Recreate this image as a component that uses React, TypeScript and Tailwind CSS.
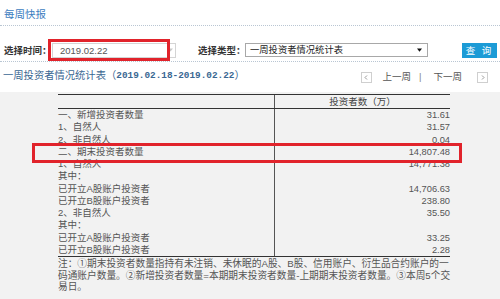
export default function App() {
  const rows: [string, string][] = [
    ["一、新增投资者数量", "31.61"],
    ["1、自然人", "31.57"],
    ["2、非自然人", "0.04"],
    ["二、期末投资者数量", "14,807.48"],
    ["1、自然人", "14,771.38"],
    ["其中：", ""],
    ["已开立A股账户投资者", "14,706.63"],
    ["已开立B股账户投资者", "238.80"],
    ["2、非自然人", "35.50"],
    ["其中：", ""],
    ["已开立A股账户投资者", "33.25"],
    ["已开立B股账户投资者", "2.28"],
  ];
  return (
    <div className="relative w-[500px] h-[299px] overflow-hidden bg-white font-['Liberation_Sans','Noto_Sans_CJK_SC',sans-serif] text-[#333] flex flex-col">
      {/* header */}
      <div className="h-[26px] shrink-0 border-b border-dotted border-[#b9c6d3] pl-[4px] pt-[3px] text-[10.5px] leading-[22px] text-[#3c7dc0]">
        每周快报
      </div>

      {/* filter row */}
      <div className="h-[36px] shrink-0 flex items-center border-b border-dotted border-[#b9c6d3] pt-[16px] pb-[3px]">
        <span className="ml-[4px] w-[48px] text-[9.5px] leading-[15px] font-bold text-[#333] whitespace-nowrap">选择时间：</span>
        <div className="w-[124px] h-[15px] border border-[#d4d4d4] flex items-center justify-between pl-[7px] pr-[2px]">
          <span className="text-[9.5px] leading-[13px] text-[#555]">2019.02.22</span>
          <svg width="5" height="4" viewBox="0 0 5 4">
            <path d="M0 0.5 L5 0.5 L2.5 3.5 Z" fill="#c8c8c8" />
          </svg>
        </div>
        <span className="ml-[22px] w-[47px] text-[9.5px] leading-[15px] font-bold text-[#333] whitespace-nowrap">选择类型：</span>
        <div className="w-[183px] h-[14px] border border-[#a8a8a8] flex items-center justify-between pl-[4px] pr-[5px]">
          <span className="text-[9.3px] leading-[12px] text-[#222] whitespace-nowrap">一周投资者情况统计表</span>
          <svg width="5" height="4" viewBox="0 0 5 4">
            <path d="M0 0.5 L5 0.5 L2.5 3.8 Z" fill="#111" />
          </svg>
        </div>
        <button className="ml-auto mr-[3px] w-[35px] h-[15px] bg-[#1c9bd6] text-white text-[9.5px] leading-[15px] tracking-[2px] flex items-center justify-center">
          查 询
        </button>
      </div>

      {/* title row */}
      <div className="h-[30px] shrink-0 flex items-center justify-between pl-[3px] pr-[12px]">
        <div className="flex items-center text-[10.3px] leading-[14px] text-[#3a6792] whitespace-nowrap -mt-[2px]">
          <span>一周投资者情况统计表（</span>
          <span className="font-['Liberation_Mono',monospace] text-[9.4px] font-bold">2019.02.18-2019.02.22</span>
          <span>）</span>
        </div>
        <div className="flex items-center text-[9.5px] leading-[12px] text-[#555]">
          <span className="w-[11px] h-[11px] border border-[#cfcfcf] flex items-center justify-center">
            <svg width="4" height="5" viewBox="0 0 4 5">
              <path d="M3 0.5 L1 2.5 L3 4.5" stroke="#999" fill="none" strokeWidth="1" />
            </svg>
          </span>
          <span className="ml-[11px]">上一周</span>
          <span className="ml-[8px] text-[#888]">|</span>
          <span className="ml-[12px]">下一周</span>
          <span className="ml-[15px] w-[11px] h-[11px] border border-[#cfcfcf] flex items-center justify-center">
            <svg width="4" height="5" viewBox="0 0 4 5">
              <path d="M1 0.5 L3 2.5 L1 4.5" stroke="#999" fill="none" strokeWidth="1" />
            </svg>
          </span>
        </div>
      </div>

      {/* gray content */}
      <div className="flex-1 bg-[#f2f2f2] pt-[2px] pl-[58px]">
        <div className="w-[392px]">
          <div className="flex h-[15px] border-t border-b border-[#333]">
            <div className="w-[216px]" />
            <div className="flex-1 border-l border-[#555] text-center text-[9.5px] leading-[13px] text-[#444]">投资者数（万）</div>
          </div>
          <div className="grid grid-cols-[216px_1fr] border-b border-[#333]">
            <div className="flex flex-col">
              {rows.map(([l], i) => (
                <div key={i} className="h-[12.25px] text-[9.5px] leading-[12.25px] text-[#555] whitespace-nowrap">{l}</div>
              ))}
            </div>
            <div className="flex flex-col border-l border-[#555]">
              {rows.map(([, v], i) => (
                <div key={i} className="h-[12.25px] text-right text-[9.3px] leading-[12.25px] text-[#555]">{v}</div>
              ))}
            </div>
          </div>
          <div className="pt-[1px] text-[9.7px] leading-[11.6px] text-[#555] whitespace-nowrap">
            <div>注：①期末投资者数量指持有未注销、未休眠的A股、B股、信用账户、衍生品合约账户的一</div>
            <div>码通账户数量。②新增投资者数量=本期期末投资者数量-上期期末投资者数量。③本周5个交</div>
            <div>易日。</div>
          </div>
        </div>
      </div>

      {/* red highlight boxes */}
      <div className="absolute left-[48px] top-[39px] w-[122px] h-[22px] border-[3px] border-[#e1232b]" />
      <div className="absolute left-[32px] top-[143px] w-[430px] h-[20px] border-[3px] border-[#e1232b]" />
    </div>
  );
}
